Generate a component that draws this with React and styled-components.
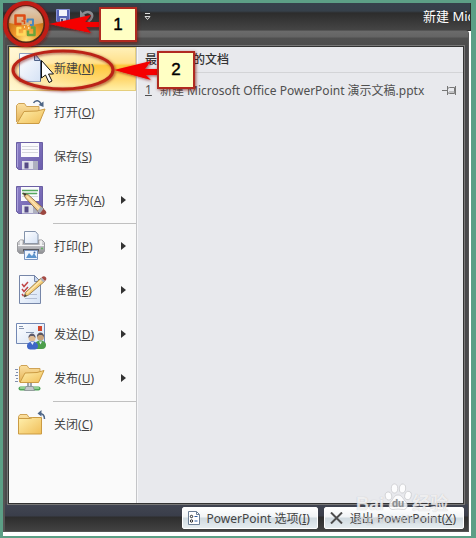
import React from 'react';
import styled, { createGlobalStyle, css } from 'styled-components';

const GlobalStyle = createGlobalStyle`
  * {
    box-sizing: border-box;
  }

  body {
    margin: 0;
    background: #5c9f86;
    font-family: "Noto Sans", "Noto Sans CJK SC", sans-serif;
    font-size: 12px;
    color: #444;
  }

  button {
    font: inherit;
    color: inherit;
    border: none;
    background: none;
    padding: 0;
    cursor: pointer;
  }
`;

const Frame = styled.div`
  position: relative;
  padding: 3px 5px 3px 3px;
  background: #5c9f86;
  overflow: hidden;
`;

const Page = styled.div`
  padding: 0 1px 4px 0;
  background: linear-gradient(#2f2f2f 28px, #fff 28px);
`;

const TitleBar = styled.header`
  display: flex;
  align-items: center;
  justify-content: space-between;
  height: 27px;
  padding-left: 53px;
  overflow: hidden;
  background: linear-gradient(#36424c 0, #36404a 8px, #2c2c2c 10px, #454545 100%);
`;

const QuickTools = styled.div`
  display: flex;
  align-items: center;
  gap: 10px;
`;

const ToolButton = styled.button`
  display: flex;
  height: 16px;
  margin-left: ${(props) => (props.$last ? '40px' : '0')};
`;

const Title = styled.h1`
  width: 47px;
  margin: 0;
  font-size: 13px;
  font-weight: 400;
  line-height: 27px;
  white-space: nowrap;
  color: #fff;
`;

const OfficeMenu = styled.section`
  margin-right: 1px;
  border: solid #555;
  border-width: 1px 1px 1px 2px;
  border-radius: 0 4px 0 0;
  background: #4a4a4c;
`;

const TopBand = styled.div`
  height: 15px;
  background: linear-gradient(#6b6b6b 0, #646464 6px, #505050 7px, #4c4c4c 100%);
`;

const Panes = styled.div`
  display: grid;
  grid-template-columns: 128px 1fr;
  min-height: 458px;
  margin: 0 4px 0 3px;
  border: 1px solid #333;
  outline: 1px solid #777;
`;

const Commands = styled.nav`
  background: #fafafa;
  border-right: 1px solid #c4c5c8;
`;

const Command = styled.button`
  display: flex;
  align-items: center;
  gap: 7px;
  width: 100%;
  height: 44px;
  padding: 0 10px 2px 6px;
  text-align: left;
  color: #444;
  ${(props) => props.$active && css`
    border: 1px solid #e5ce7c;
    padding: 0 9px 2px 5px;
    background:
      linear-gradient(90deg, rgba(255, 250, 225, 0.75), rgba(255, 250, 225, 0) 65%),
      linear-gradient(#fff0b8 0, #ffe08a 36%, #ffc83c 42%, #ffd870 75%, #fff0a8 100%);
  `}
`;

const CommandName = styled.span`
  flex: 1;
  white-space: nowrap;
`;

const Separator = styled.hr`
  height: 1px;
  margin: 0 0 1px 44px;
  border: none;
  background: #c0c0c0;
`;

const Recent = styled.section`
  min-width: 0;
  background: #e8e9ed;
  border-left: 1px solid #f6f6f8;
`;

const RecentTitle = styled.h2`
  height: 26px;
  margin: 0;
  padding-left: 7px;
  border-bottom: 1px solid #d3d4d7;
  font-size: 12px;
  font-weight: 500;
  line-height: 25px;
  color: #333;
`;

const RecentList = styled.ul`
  margin: 0;
  padding: 5px 6px 0 7px;
  list-style: none;
`;

const RecentItem = styled.li`
  display: flex;
  align-items: center;
  justify-content: space-between;
  height: 24px;
`;

const RecentLink = styled.a`
  display: flex;
  gap: 8px;
  white-space: nowrap;
  color: #505050;
  text-decoration: none;
`;

const Footer = styled.footer`
  display: flex;
  justify-content: flex-end;
  gap: 6px;
  padding: 3px 4px 2px;
  background: linear-gradient(#414552 0, #3a3e4a 12px, #2d2d2d 13px, #424242 100%);
`;

const FooterButton = styled.button`
  display: flex;
  align-items: center;
  gap: 7px;
  height: 22px;
  padding: 0 7px 0 5px;
  border: 1px solid #fff;
  border-radius: 2px;
  background: linear-gradient(#fff 0, #f1f4f6 45%, #d0dae0 50%, #e6edf0 100%);
  white-space: nowrap;
`;

const Orb = styled.button`
  position: absolute;
  left: 3px;
  top: 1px;
  display: flex;
`;

const Annotations = styled.svg`
  position: absolute;
  left: 0;
  top: 0;
  pointer-events: none;
`;

const Callout = styled.div`
  position: absolute;
  left: ${(props) => props.$left}px;
  top: ${(props) => props.$top}px;
  width: 38px;
  height: ${(props) => props.$height}px;
  border: 2px solid #b02a20;
  background: #ffffc4;
  box-shadow: 1px 1px 3px rgba(120, 20, 10, 0.7);
  font-family: "Liberation Sans", sans-serif;
  font-size: 17px;
  line-height: ${(props) => props.$height - 4}px;
  text-align: center;
  color: #000;
  -webkit-text-stroke: 0.4px #000;
`;

const Watermark = styled.div`
  position: absolute;
  right: 28px;
  bottom: 13px;
  display: grid;
  grid-template-columns: auto 28px auto;
  align-items: end;
  font-family: "Liberation Sans", "Noto Sans CJK SC", sans-serif;
  font-size: 18px;
  font-weight: 700;
  line-height: 20px;
  color: rgba(255, 255, 255, 0.75);
  text-shadow: 0 0 1px rgba(150, 150, 155, 0.6);
  pointer-events: none;
`;

const PawCell = styled.span`
  display: flex;
  padding-bottom: 2px;
`;

const WatermarkSite = styled.span`
  grid-column: 1 / -1;
  font-size: 10px;
  font-weight: 400;
  line-height: 12px;
  color: rgba(255, 255, 255, 0.5);
`;

const Defs = () => (
  <svg width="0" height="0" style={{ position: 'absolute' }} aria-hidden="true">
    <defs>
      <linearGradient id="folder" x1="0" y1="0" x2="1" y2="1">
        <stop offset="0" stopColor="#fff0ae" />
        <stop offset="1" stopColor="#f0be58" />
      </linearGradient>
      <linearGradient id="folderBack" x1="0" y1="0" x2="0" y2="1">
        <stop offset="0" stopColor="#fbe0a0" />
        <stop offset="1" stopColor="#e5b458" />
      </linearGradient>
      <linearGradient id="paper" x1="0" y1="0" x2="1" y2="1">
        <stop offset="0" stopColor="#ffffff" />
        <stop offset="1" stopColor="#d5e2f5" />
      </linearGradient>
      <linearGradient id="disk" x1="0" y1="0" x2="1" y2="1">
        <stop offset="0" stopColor="#8c80c6" />
        <stop offset="1" stopColor="#6b5dac" />
      </linearGradient>
      <linearGradient id="metal" x1="0" y1="0" x2="0" y2="1">
        <stop offset="0" stopColor="#e3e3e5" />
        <stop offset="0.5" stopColor="#b8b8bc" />
        <stop offset="1" stopColor="#8c8d91" />
      </linearGradient>
      <radialGradient id="orb" cx="0.5" cy="0.95" r="0.8">
        <stop offset="0" stopColor="#ffe27a" />
        <stop offset="0.45" stopColor="#f0962a" />
        <stop offset="1" stopColor="#b8640f" />
      </radialGradient>
      <linearGradient id="orbShine" x1="0" y1="0" x2="0" y2="1">
        <stop offset="0" stopColor="#ddd0bf" />
        <stop offset="1" stopColor="#d9a873" />
      </linearGradient>
      <filter id="glow" x="-30%" y="-30%" width="160%" height="160%">
        <feDropShadow dx="1" dy="1" stdDeviation="1.5" floodColor="#7a1008" floodOpacity="0.7" />
      </filter>
    </defs>
  </svg>
);

const Icon = ({ children }) => (
  <svg width="32" height="32" viewBox="0 0 32 32" fill="none" aria-hidden="true">
    {children}
  </svg>
);

const Disk = () => (
  <>
    <path d="M1.500 2.500h26v27h-24l-2-2z" fill="url(#disk)" stroke="#6a5fa3" />
    <path d="M6 3h18v14H6z" fill="#fafafd" />
    <path d="M7 6.500h16M7 9.500h16M7 12.500h16" stroke="#d5d6dd" />
    <path d="M7 21h16v8.500H7z" fill="#dfe1ea" />
    <path d="M9.500 22.500h4v6h-4z" fill="#554b86" />
    <path d="M18 21h5v8.500h-5z" fill="#aeb0c0" />
    <path d="M2.500 4v23" stroke="#aaa0dc" />
  </>
);

const NewIcon = () => (
  <Icon>
    <path d="M4.500 1.500h15l6 7v21h-21z" fill="url(#paper)" stroke="#8fa0bd" />
    <path d="M19.500 1.500v7h6z" fill="#b8cbea" stroke="#4c5f85" />
    <path d="M25.500 9v20.500" stroke="#4c5f85" />
  </Icon>
);

const OpenIcon = () => (
  <Icon>
    <path d="M1.500 26V9.500l2-2h6l2 3h12.500v4" fill="url(#folderBack)" stroke="#cfa356" />
    <path d="M2 27.500l7-12 13-.5 8-2-6 14.500z" fill="url(#folder)" stroke="#cb9b43" strokeLinejoin="round" />
    <path d="M18.500 7c2-3.500 6-3 7.500 1" stroke="#4e6687" strokeWidth="1.500" />
    <path d="M28.500 5.500v5.500l-5-2z" fill="#4e6687" />
  </Icon>
);

const SaveIcon = () => <Icon><Disk /></Icon>;

const SaveAsIcon = () => (
  <Icon>
    <Disk />
    <path d="M7 6.500h16M7 9.500h15" stroke="#55a85e" strokeWidth="1.300" />
    <path d="M8 9l5.500 2L29 25l-4 4.500L10.500 14z" fill="#f6cf8e" stroke="#765b35" strokeWidth=".8" />
    <path d="M12 12.500l14.500 14.500" stroke="#fde5b5" strokeWidth="1.200" />
    <path d="M8 9l3.500 1-1.500 2z" fill="#333" />
    <path d="M26 22.500l-3.500 4.500 2.500 2.500 4-4.500z" fill="#a9abb4" />
    <path d="M28.500 25l-3.500 4.500c2 2 4 1.500 5.500.5s1-3-2-5z" fill="#9c4740" />
  </Icon>
);

const PrintIcon = () => (
  <Icon>
    <path d="M9.500 1.500h11l2.500 3v9H9.500z" fill="url(#paper)" stroke="#8393ab" />
    <path d="M2.500 12.500l3-2.500h3v4h15v-4h3.500l2.500 2.500v9l-2 2h-23l-2-2z" fill="url(#metal)" stroke="#9a9b9f" />
    <path d="M6 10.500v5M26 10.500v5" stroke="#f0f0f0" strokeWidth="2" />
    <path d="M3 15.500h26" stroke="#f4f4f5" />
    <path d="M8 19h16v2.500H8z" fill="#55565b" />
    <path d="M9.500 20.500h13v9h-13z" fill="#eef5ff" stroke="#7994c0" />
    <path d="M11 28l3-5 3 3 2-3 3 5z" fill="#5a93cd" />
    <circle cx="19.500" cy="22.500" r="1" fill="#3a6cb0" />
    <circle cx="27" cy="18.500" r="1" fill="#5cb25c" />
  </Icon>
);

const PrepareIcon = () => (
  <Icon>
    <path d="M4.500 1.500h15l6 6v22h-21z" fill="url(#paper)" stroke="#7686a8" />
    <path d="M19.500 1.500v6h6z" fill="#c9d8ef" stroke="#7686a8" />
    <path d="M7 10l2 2.500 4-4.500M7 15l2 2.500 4-4.500M7 20l1.500 2" stroke="#c14646" strokeWidth="1.500" />
    <path d="M10 24.500h12M15 20.500h7" stroke="#b4bfd4" />
    <path d="M9 23l1.500-4.500L26 4l3.500 3.500L13.500 21z" fill="#f6cf78" stroke="#8d6b33" strokeWidth=".8" />
    <path d="M12 19L27 5.500" stroke="#fdeaba" strokeWidth="1.200" />
    <path d="M9 23l1-3 2 2z" fill="#444" />
    <path d="M25 5l3.500 3.500 1.500-1.500-3.500-3.500z" fill="#aeb1bb" />
    <path d="M26.500 3.500l3.500 3.500c2-1.500 1.500-3 .500-4s-2.500-1-4 .5z" fill="#a54c46" />
  </Icon>
);

const SendIcon = () => (
  <Icon>
    <path d="M1.500 5.500h28v20h-28z" fill="url(#paper)" stroke="#7288b4" />
    <path d="M4 8.500h4M4 10.500h5M11 14.500h8" stroke="#8494b0" />
    <path d="M23 8h4v5h-4z" fill="#d3452d" />
    <circle cx="25.500" cy="19" r="3.500" fill="#c9a37c" />
    <path d="M22 19c-.5-6 7.500-6 7 0l-2-2h-3z" fill="#5a5560" />
    <path d="M20 31v-4c0-6 11-6 11 0 0 2-1 4-4 4z" fill="#4c9e4b" />
    <circle cx="17" cy="20" r="3.500" fill="#e0bd96" />
    <path d="M13.500 20c-.5-6 7.500-6 7 0l-2-2h-3z" fill="#5d5a6b" />
    <path d="M12 28c0-6 11-6 11 0 0 3-2 3.500-5.500 3.500S12 31 12 28z" fill="#3f66c8" />
    <path d="M15.500 24l2 3 1.500-3M24 23.500l1.500 3 1.500-3" fill="#e6eefb" />
  </Icon>
);

const PublishIcon = () => (
  <Icon>
    <path d="M4.500 20V5l1.500-1.500h6l2 3h11v5" fill="url(#folderBack)" stroke="#cfa356" />
    <path d="M5 20.500l5-9.500 12-.5 7-2-5.500 12z" fill="url(#folder)" stroke="#cb9b43" strokeLinejoin="round" />
    <path d="M0 7.500h3M1 10.500h2M0 13.500h3M1 16.500h2M0 19.500h3" stroke="#8390ae" />
    <path d="M12 21h5v5h-5z" fill="#9ea3ab" />
    <path d="M14.500 21v5" stroke="#e5e7ea" />
    <path d="M5.500 26.500h18" stroke="#4fa358" strokeWidth="4" strokeLinecap="round" />
    <path d="M5.500 26h18" stroke="#a8dfa5" strokeWidth="1.500" strokeLinecap="round" />
    <path d="M11 24.500h7l1.500 4h-10z" fill="#c3c7cc" stroke="#858991" strokeWidth=".7" />
  </Icon>
);

const CloseIcon = () => (
  <Icon>
    <path d="M3.500 24V8.500L5 6.500h7l2 3h11.500V24" fill="url(#folderBack)" stroke="#cfa356" />
    <path d="M3.500 10.500h12l2-1h9v16.500h-23z" fill="url(#folder)" stroke="#cb9b43" strokeLinejoin="round" />
    <path d="M29.500 11c0-4-2-5.500-5-5.500" stroke="#4e6687" strokeWidth="1.500" />
    <path d="M22.500 5.500l4-3.500v6.500z" fill="#4e6687" />
  </Icon>
);

const SubmenuArrow = () => (
  <svg width="5" height="8" viewBox="0 0 5 8" aria-hidden="true">
    <path d="M0 0l5 4-5 4z" fill="#333" />
  </svg>
);

const PinIcon = () => (
  <svg width="15" height="10" viewBox="0 0 15 10" fill="none" aria-hidden="true">
    <path d="M0 5.500h5M5.500 1v9M5.500 3.500l2-1M5.500 7.500l2 1M7.500 2.500h5v6h-5M13.500 1v9" stroke="#777" />
    <path d="M7 7h6" stroke="#999" />
  </svg>
);

const OptionsIcon = () => (
  <svg width="12" height="14" viewBox="0 0 12 14" fill="none" aria-hidden="true">
    <path d="M.5.5h8l3 3v10H.5z" fill="#fff" stroke="#6d8097" />
    <path d="M8.500.5v3h3" stroke="#6d8097" />
    <circle cx="3.500" cy="5.500" r="1.200" stroke="#222" />
    <circle cx="3.500" cy="10" r="1.200" stroke="#222" />
    <path d="M6.500 5.500h3M6.500 10h3" stroke="#2f5c9e" />
  </svg>
);

const ExitIcon = () => (
  <svg width="13" height="12" viewBox="0 0 13 12" fill="none" aria-hidden="true">
    <path d="M1 .5l11 11M12 .5l-11 11" stroke="#4d4d4d" strokeWidth="2" />
  </svg>
);

const OrbLogo = () => (
  <svg width="46" height="46" viewBox="0 0 46 46" fill="none" aria-hidden="true">
    <circle cx="23" cy="23" r="20" fill="#4a2a18" />
    <circle cx="23" cy="23" r="17.500" fill="url(#orb)" />
    <path d="M6 22a17 17 0 0 1 34 0q-17 4-34 0z" fill="url(#orbShine)" />
    <path d="M21.500 19v-4.500h-9v8.500h6" stroke="#dd4b15" strokeWidth="2.500" strokeLinejoin="round" />
    <path d="M18.500 20h3v3" stroke="#dd4b15" strokeWidth="1.500" />
    <path d="M24.500 21.500v-3h5.500v5.500h-3" stroke="#4b87bb" strokeWidth="2" strokeLinejoin="round" />
    <path d="M21.500 29v4.500h-7V27h4" stroke="#ffd95c" strokeWidth="2.500" strokeLinejoin="round" />
    <path d="M25 29.500V34h6.500v-7.500H28" stroke="#6ba43c" strokeWidth="2.500" strokeLinejoin="round" />
    <path d="M24.500 24.500h1M21 26h1M25 27h1.500" stroke="#fff1c4" strokeWidth="1.500" />
  </svg>
);

const Paw = () => (
  <svg width="28" height="29" viewBox="0 0 28 29" aria-hidden="true">
    <g fill="#fff" fillOpacity=".85" stroke="#bfc0c4" strokeWidth=".6">
      <ellipse cx="4.500" cy="13" rx="3.200" ry="4" transform="rotate(-15 4.500 13)" />
      <ellipse cx="10.500" cy="5.500" rx="3.200" ry="4.500" />
      <ellipse cx="18.500" cy="5.500" rx="3.200" ry="4.500" transform="rotate(10 18.500 5.500)" />
      <ellipse cx="24" cy="12.500" rx="3.200" ry="4.200" transform="rotate(15 24 12.500)" />
      <path d="M14 12c-4 0-4.500 4-7 6.500-3 3-2.500 8 2 8 2 0 3-.5 5-.5s3.500.5 5.500.5c4 0 5-5 2-8-2.500-2.500-3.500-6.500-7.500-6.500z" />
    </g>
    <text x="14" y="24" fontSize="10" fontWeight="700" textAnchor="middle" fill="#8b8c91">du</text>
  </svg>
);

const commands = [
  { name: '新建', accessKey: 'N', icon: NewIcon, active: true },
  { name: '打开', accessKey: 'O', icon: OpenIcon },
  { name: '保存', accessKey: 'S', icon: SaveIcon },
  { name: '另存为', accessKey: 'A', icon: SaveAsIcon, submenu: true, separator: true },
  { name: '打印', accessKey: 'P', icon: PrintIcon, submenu: true },
  { name: '准备', accessKey: 'E', icon: PrepareIcon, submenu: true },
  { name: '发送', accessKey: 'D', icon: SendIcon, submenu: true },
  { name: '发布', accessKey: 'U', icon: PublishIcon, submenu: true, separator: true },
  { name: '关闭', accessKey: 'C', icon: CloseIcon },
];

const App = () => {
  return (
    <>
      <GlobalStyle />
      <Defs />
      <Frame>
        <Page>
          <TitleBar>
            <QuickTools>
              <ToolButton aria-label="保存">
                <svg width="14" height="14" viewBox="0 0 14 14" aria-hidden="true">
                  <path d="M.5.5h13v13H2l-1.500-1.500z" fill="#5865b5" stroke="#8792d7" />
                  <path d="M3 1h8v6H3z" fill="#f2f3fa" />
                  <path d="M4 9h6v4H4z" fill="#c9cde2" />
                  <path d="M5 10h2v3H5z" fill="#3c437e" />
                </svg>
              </ToolButton>
              <ToolButton aria-label="撤消">
                <svg width="14" height="14" viewBox="0 0 14 14" fill="none" aria-hidden="true">
                  <path d="M3 5c5-4 10-1 9 3-.5 2-2 3.500-4 5" stroke="#8a8d92" strokeWidth="2.500" />
                  <path d="M0 1v8h7z" fill="#8a8d92" />
                </svg>
              </ToolButton>
              <ToolButton aria-label="自定义快速访问工具栏" $last>
                <svg width="7" height="14" viewBox="0 0 7 14" fill="none" aria-hidden="true">
                  <path d="M1 4.500h5" stroke="#ddd" />
                  <path d="M1 7.500h5l-2.500 3z" stroke="#ddd" />
                </svg>
              </ToolButton>
            </QuickTools>
            <Title>新建 Microsoft Office PowerPoint 演示文稿</Title>
          </TitleBar>

          <OfficeMenu>
            <TopBand />
            <Panes>
              <Commands>
                {commands.map(({ name, accessKey, icon: CommandIcon, active, submenu, separator }) => (
                  <React.Fragment key={accessKey}>
                    <Command $active={active}>
                      <CommandIcon />
                      <CommandName>{name}(<u>{accessKey}</u>)</CommandName>
                      {submenu && <SubmenuArrow />}
                    </Command>
                    {separator && <Separator />}
                  </React.Fragment>
                ))}
              </Commands>
              <Recent>
                <RecentTitle>最近使用的文档</RecentTitle>
                <RecentList>
                  <RecentItem>
                    <RecentLink href="#recent">
                      <u>1</u>
                      <span>新建 Microsoft Office PowerPoint 演示文稿.pptx</span>
                    </RecentLink>
                    <button aria-label="固定"><PinIcon /></button>
                  </RecentItem>
                </RecentList>
              </Recent>
            </Panes>
            <Footer>
              <FooterButton>
                <OptionsIcon />
                <span>PowerPoint 选项(<u>I</u>)</span>
              </FooterButton>
              <FooterButton>
                <ExitIcon />
                <span>退出 PowerPoint(<u>X</u>)</span>
              </FooterButton>
            </Footer>
          </OfficeMenu>
        </Page>

        <Orb aria-label="Office 按钮"><OrbLogo /></Orb>

        <Annotations width="200" height="100" viewBox="0 0 200 100" fill="none" aria-hidden="true">
          <g filter="url(#glow)">
            <circle cx="26" cy="24" r="21" stroke="#c01c14" strokeWidth="4" />
            <ellipse cx="63" cy="70" rx="50" ry="19" stroke="#bb2217" strokeWidth="3" />
            <path d="M49 24l42-9-6 7h14v5H86l5 6z" fill="#f50000" />
            <path d="M114 70l37-9-6 8h16v6h-15l5 5z" fill="#f50000" />
          </g>
          <path d="M41.500 60.500v17.500l4-3 3.500 7.500 3-1.500-3.500-7h5z" fill="#fff" stroke="#111" />
        </Annotations>
        <Callout $left={99} $top={7} $height={35}>1</Callout>
        <Callout $left={157} $top={51} $height={38}>2</Callout>

        <Watermark>
          <span>Bai</span>
          <PawCell><Paw /></PawCell>
          <span>经验</span>
          <WatermarkSite>jingyan.baidu.com</WatermarkSite>
        </Watermark>
      </Frame>
    </>
  );
};

export default App;
